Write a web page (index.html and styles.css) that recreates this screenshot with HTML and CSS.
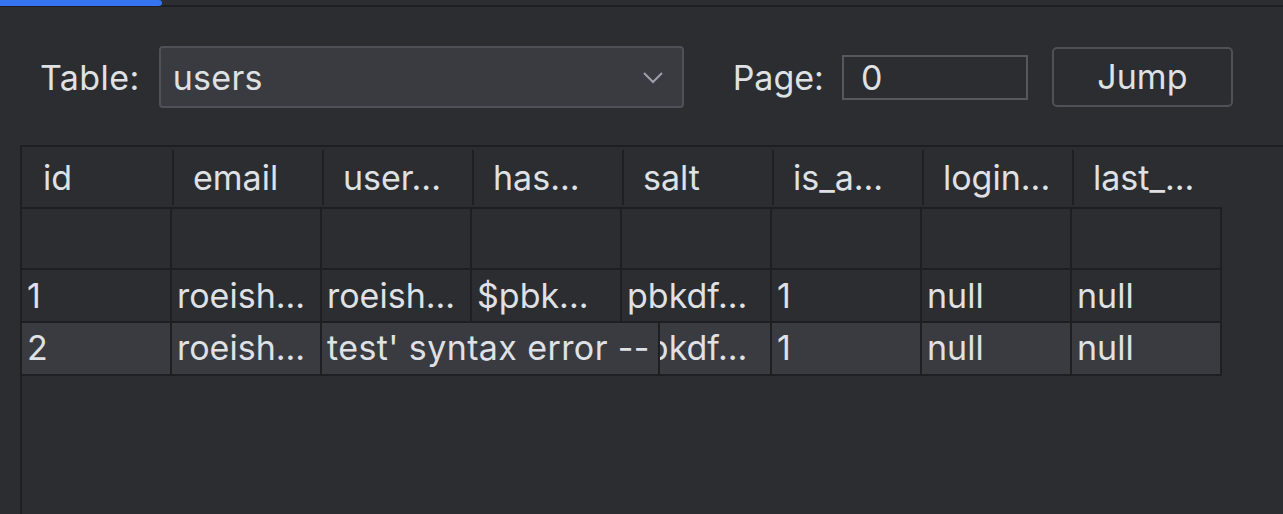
FILE: index.html
```html
<!DOCTYPE html>
<html lang="en">
<head>
<meta charset="utf-8">
<title>Table browser</title>
<link rel="stylesheet" href="styles.css">
</head>
<body>
<div class="tabstrip"><div class="tab-indicator"></div></div>
<div class="toolbar">
  <span class="label table-label">Table:</span>
  <div class="combo">
    <span class="combo-value">users</span>
    <svg class="chevron" width="22" height="14" viewBox="0 0 22 14"><path d="M2 2 L11 11 L20 2" fill="none" stroke="#9da0a8" stroke-width="2"/></svg>
  </div>
  <span class="label page-label">Page:</span>
  <div class="page-input">0</div>
  <button class="jump">Jump</button>
</div>
<div class="table-wrap">
  <div class="thead">
    <div class="th">id</div>
    <div class="th">email</div>
    <div class="th">user...</div>
    <div class="th">has...</div>
    <div class="th">salt</div>
    <div class="th">is_a...</div>
    <div class="th">login...</div>
    <div class="th">last_...</div>
  </div>
  <div class="tr filter">
    <div class="td"></div><div class="td"></div><div class="td"></div><div class="td"></div>
    <div class="td"></div><div class="td"></div><div class="td"></div><div class="td"></div>
  </div>
  <div class="tr">
    <div class="td">1</div>
    <div class="td">roeish...</div>
    <div class="td">roeish...</div>
    <div class="td">$pbk...</div>
    <div class="td">pbkdf...</div>
    <div class="td">1</div>
    <div class="td">null</div>
    <div class="td">null</div>
  </div>
  <div class="tr selected">
    <div class="td">2</div>
    <div class="td">roeish...</div>
    <div class="td editing"><div class="editor">test' syntax error --</div></div>
    <div class="td">$pbk...</div>
    <div class="td">pbkdf...</div>
    <div class="td">1</div>
    <div class="td">null</div>
    <div class="td">null</div>
  </div>
</div>
</body>
</html>
```

FILE: styles.css
```css
* { box-sizing: border-box; }
html, body { height: 100%; }
body {
  margin: 0;
  background: #2b2d30;
  color: #dfe1e5;
  font-family: Inter, "Noto Sans", sans-serif;
  font-size: 34px;
  display: flex;
  flex-direction: column;
  overflow: hidden;
}
.tabstrip {
  height: 7px;
  flex: none;
  box-shadow: inset 0 -2px 0 #1e1f22;
}
.tab-indicator {
  width: 162px;
  height: 6px;
  background: #3574f0;
  border-radius: 0 3px 3px 0;
}
.toolbar {
  flex: none;
  display: flex;
  align-items: center;
  padding: 39px 0 0 40px;
}
.label { line-height: 41px; }
.table-label { margin-right: 19px; letter-spacing: 0.4px; }
.combo {
  width: 525px;
  height: 62px;
  background: #393b40;
  border: 2px solid #4e5157;
  border-radius: 4px;
  display: flex;
  align-items: center;
  justify-content: space-between;
  padding: 0 18px 0 12px;
}
.combo-value { letter-spacing: 0.3px; }
.chevron { margin-top: 2px; }
.page-label { margin-left: 49px; margin-right: 18px; }
.page-input {
  width: 186px;
  height: 45px;
  border: 2px solid #55585e;
  display: flex;
  align-items: center;
  padding-left: 17px;
}
.jump {
  margin-left: 24px;
  width: 181px;
  height: 60px;
  background: #2b2d30;
  border: 2px solid #4e5157;
  border-radius: 5px;
  color: #dfe1e5;
  font: inherit;
  padding: 0 0 2px;
}
.table-wrap {
  flex: 1;
  margin: 37px 0 0 20px;
  border-top: 2px solid #1e1f22;
  border-left: 2px solid #1e1f22;
}
.thead {
  width: 1200px;
  display: flex;
  padding: 3px 0 2px;
  border-bottom: 2px solid #1e1f22;
}
.th {
  width: 150px;
  height: 55px;
  line-height: 55px;
  padding-left: 19px;
  border-left: 2px solid #1e1f22;
  white-space: nowrap;
  overflow: hidden;
}
.th:first-child { border-left-color: transparent; }
.tr {
  width: 1200px;
  display: flex;
  border-bottom: 2px solid #1e1f22;
}
.td {
  width: 150px;
  height: 51px;
  line-height: 51px;
  padding-left: 5px;
  border-right: 2px solid #1e1f22;
  white-space: nowrap;
  overflow: hidden;
}
.filter .td { height: 59px; }
.selected { background: #393b40; }
.selected .td { line-height: 49px; }
.td.editing { overflow: visible; position: relative; }
.editor {
  position: absolute;
  left: 0;
  top: 0;
  bottom: 0;
  width: 338px;
  padding-left: 5px;
  background: #393b40;
  border-right: 2px solid #1e1f22;
  letter-spacing: 0.4px;
  z-index: 1;
}
```
